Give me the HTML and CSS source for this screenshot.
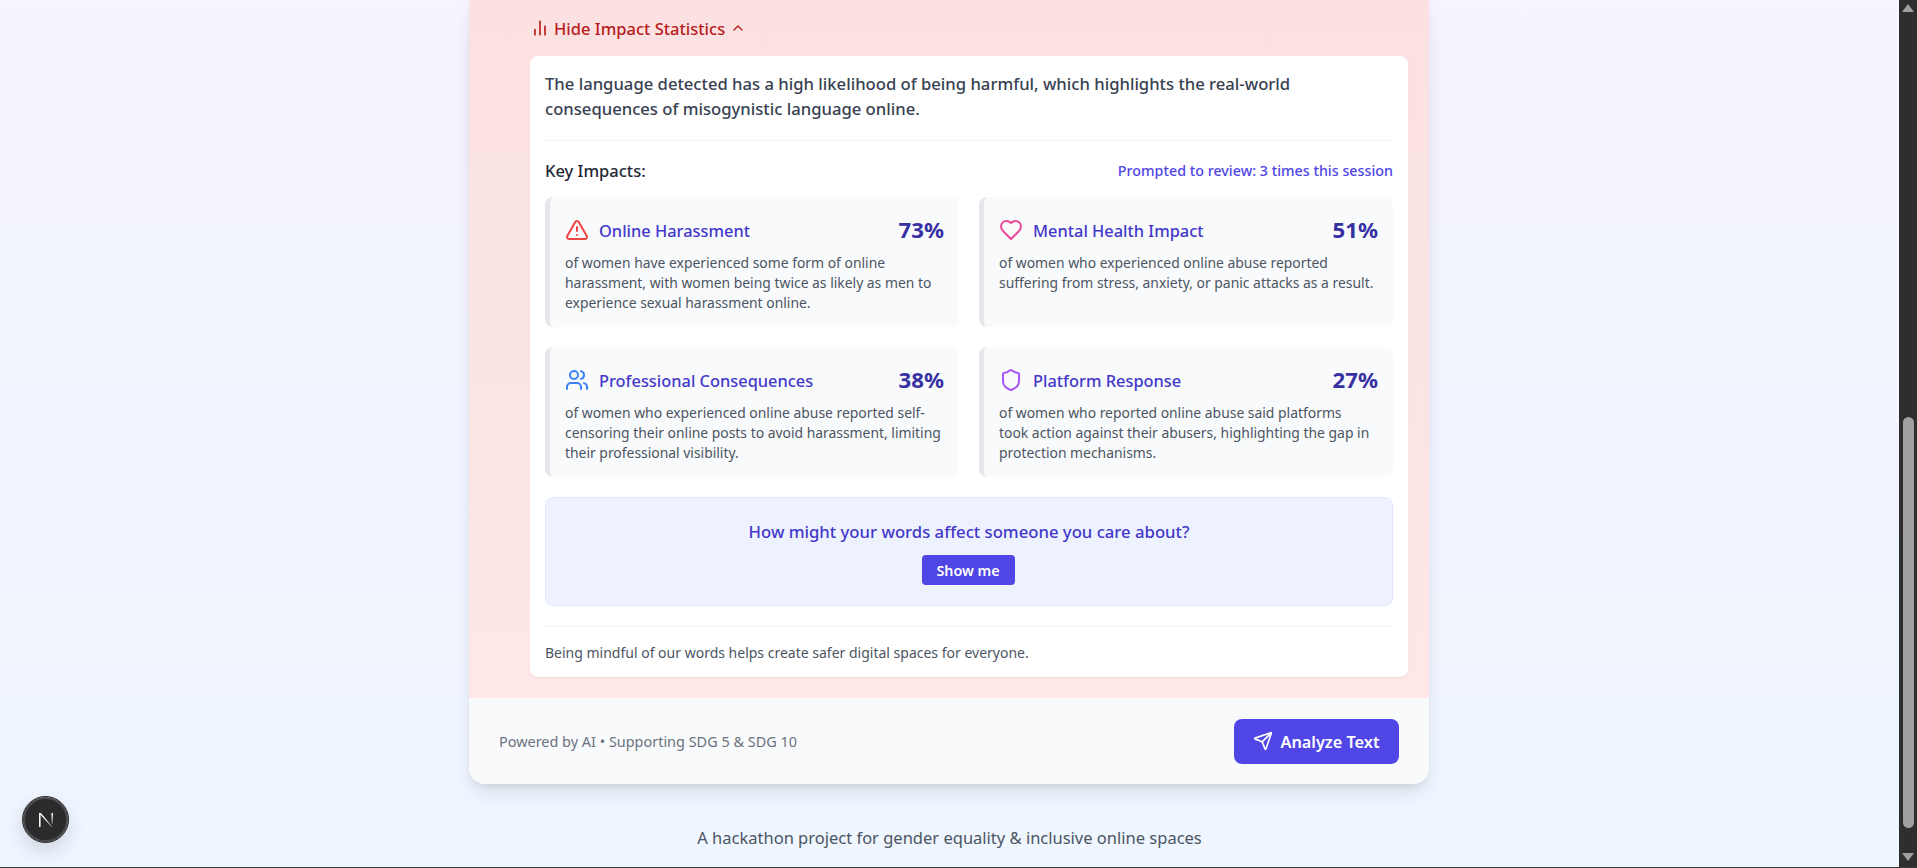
FILE: index.html
```html
<!DOCTYPE html>
<html lang="en">
<head>
    <meta charset="UTF-8">
    <meta name="viewport" content="width=device-width, initial-scale=1.0">
    <title>Impact Statistics</title>
    <link rel="stylesheet" href="styles.css">
</head>
<body>
    <div class="window">
        <div class="page">
            <div class="app-card">
                <section class="alert-panel">
                    <button class="toggle" type="button">
                        <svg class="icon toggle-chart" viewBox="0 0 24 24"><line x1="18" y1="20" x2="18" y2="10"/><line x1="12" y1="20" x2="12" y2="4"/><line x1="6" y1="20" x2="6" y2="14"/></svg>
                        <span>Hide Impact Statistics</span>
                        <svg class="icon toggle-chevron" viewBox="0 0 24 24"><path d="m18 15-6-6-6 6"/></svg>
                    </button>
                    <div class="stats-card">
                        <p class="lead">The language detected has a high likelihood of being harmful, which highlights the real-world consequences of misogynistic language online.</p>
                        <div class="stats-head">
                            <h3>Key Impacts:</h3>
                            <span class="prompted">Prompted to review: 3 times this session</span>
                        </div>
                        <div class="impact-grid">
                            <div class="impact">
                                <div class="impact-top">
                                    <svg class="icon impact-icon red" viewBox="0 0 24 24"><path d="m21.73 18-8-14a2 2 0 0 0-3.48 0l-8 14A2 2 0 0 0 4 21h16a2 2 0 0 0 1.73-3Z"/><path d="M12 9v4"/><path d="M12 17h.01"/></svg>
                                    <h4>Online Harassment</h4>
                                    <strong>73%</strong>
                                </div>
                                <p>of women have experienced some form of online harassment, with women being twice as likely as men to experience sexual harassment online.</p>
                            </div>
                            <div class="impact">
                                <div class="impact-top">
                                    <svg class="icon impact-icon pink" viewBox="0 0 24 24"><path d="M19 14c1.49-1.46 3-3.21 3-5.5A5.5 5.5 0 0 0 16.5 3c-1.76 0-3 .5-4.5 2-1.5-1.5-2.74-2-4.5-2A5.5 5.5 0 0 0 2 8.5c0 2.3 1.5 4.05 3 5.5l7 7Z"/></svg>
                                    <h4>Mental Health Impact</h4>
                                    <strong>51%</strong>
                                </div>
                                <p>of women who experienced online abuse reported suffering from stress, anxiety, or panic attacks as a result.</p>
                            </div>
                            <div class="impact">
                                <div class="impact-top">
                                    <svg class="icon impact-icon blue" viewBox="0 0 24 24"><path d="M16 21v-2a4 4 0 0 0-4-4H6a4 4 0 0 0-4 4v2"/><circle cx="9" cy="7" r="4"/><path d="M22 21v-2a4 4 0 0 0-3-3.87"/><path d="M16 3.13a4 4 0 0 1 0 7.75"/></svg>
                                    <h4>Professional Consequences</h4>
                                    <strong>38%</strong>
                                </div>
                                <p>of women who experienced online abuse reported self-censoring their online posts to avoid harassment, limiting their professional visibility.</p>
                            </div>
                            <div class="impact">
                                <div class="impact-top">
                                    <svg class="icon impact-icon purple" viewBox="0 0 24 24"><path d="M20 13c0 5-3.5 7.5-7.66 8.95a1 1 0 0 1-.67-.01C7.5 20.5 4 18 4 13V6a1 1 0 0 1 1-1c2 0 4.5-1.2 6.24-2.72a1.17 1.17 0 0 1 1.52 0C14.51 3.81 17 5 19 5a1 1 0 0 1 1 1z"/></svg>
                                    <h4>Platform Response</h4>
                                    <strong>27%</strong>
                                </div>
                                <p>of women who reported online abuse said platforms<br>took action against their abusers, highlighting the gap in protection mechanisms.</p>
                            </div>
                        </div>
                        <div class="reflect">
                            <p>How might your words affect someone you care about?</p>
                            <button type="button">Show me</button>
                        </div>
                        <p class="mindful">Being mindful of our words helps create safer digital spaces for everyone.</p>
                    </div>
                </section>
                <footer class="card-footer">
                    <span class="powered">Powered by AI • Supporting SDG 5 &amp; SDG 10</span>
                    <button class="analyze" type="button">
                        <svg class="icon" viewBox="0 0 24 24"><path d="M14.536 21.686a.5.5 0 0 0 .937-.024l6.5-19a.496.496 0 0 0-.635-.635l-19 6.5a.5.5 0 0 0-.024.937l7.93 3.18a2 2 0 0 1 1.112 1.11z"/><path d="m21.854 2.147-10.94 10.939"/></svg>
                        <span>Analyze Text</span>
                    </button>
                </footer>
            </div>
            <p class="tagline">A hackathon project for gender equality &amp; inclusive online spaces</p>
            <div class="next-badge">
                <svg viewBox="0 0 18 18" width="18" height="18">
                    <defs>
                        <linearGradient id="nextFade" x1="0" y1="0" x2="1" y2="1">
                            <stop offset="0.35" stop-color="#ffffff"/>
                            <stop offset="1" stop-color="#ffffff" stop-opacity="0.15"/>
                        </linearGradient>
                        <linearGradient id="nextStem" x1="0" y1="0" x2="0" y2="1">
                            <stop offset="0" stop-color="#ffffff"/>
                            <stop offset="1" stop-color="#ffffff" stop-opacity="0.2"/>
                        </linearGradient>
                    </defs>
                    <rect x="2" y="2" width="1.6" height="14" fill="#f2f2f2"/>
                    <polygon points="2,2 3.8,2 16,16 14.2,16" fill="url(#nextFade)"/>
                    <rect x="14.4" y="2" width="1.6" height="11" fill="url(#nextStem)"/>
                </svg>
            </div>
        </div>
        <div class="scrollbar">
            <span class="arrow-up"></span>
            <div class="scroll-track"><div class="scroll-thumb"></div></div>
            <span class="arrow-down"></span>
        </div>
    </div>
</body>
</html>
```

FILE: styles.css
```css
* {
    box-sizing: border-box;
}
body {
    margin: 0;
    font-family: "Noto Sans", "Open Sans", sans-serif;
    color: #1f2937;
    overflow: hidden;
}
h3, h4, p {
    margin: 0;
}
button {
    font-family: inherit;
    border: none;
    cursor: pointer;
}
.window {
    display: flex;
    height: 868px;
    border-bottom: 1px solid #3a3a3a;
}
.page {
    position: relative;
    flex: 1;
    display: flex;
    flex-direction: column;
    align-items: center;
    background: linear-gradient(to bottom, #f5f4ff, #eff6ff);
}
.icon {
    fill: none;
    stroke: currentColor;
    stroke-width: 2;
    stroke-linecap: round;
    stroke-linejoin: round;
    flex-shrink: 0;
}
.app-card {
    width: 960px;
    margin-right: 1px;
    border-radius: 0 0 16px 16px;
    box-shadow: 0 10px 20px -4px rgba(0,0,0,0.12), 0 4px 8px -4px rgba(0,0,0,0.1);
    overflow: hidden;
}
.alert-panel {
    height: 698px;
    padding: 18px 21px 0 61px;
    background: linear-gradient(to bottom, #fbe1e1, #fee7e7);
}
.toggle {
    display: flex;
    align-items: center;
    height: 20px;
    padding: 0;
    margin-bottom: 18px;
    background: none;
    color: #b91c1c;
    font-size: 16.5px;
    font-weight: 500;
}
.toggle-chart {
    width: 20px;
    height: 20px;
    margin-right: 4px;
}
.toggle-chevron {
    width: 16px;
    height: 16px;
    margin-left: 5px;
}
.stats-card {
    height: 621px;
    padding: 15px 15px 0;
    background: white;
    border-radius: 8px;
    box-shadow: 0 1px 2px rgba(0,0,0,0.06);
}
.lead {
    height: 70px;
    line-height: 25px;
    font-size: 16.65px;
    font-weight: 500;
    color: #374151;
    border-bottom: 1px solid #f3f4f6;
}
.stats-head {
    display: flex;
    justify-content: space-between;
    align-items: center;
    height: 56px;
    padding-top: 2px;
}
.stats-head h3 {
    font-size: 16.5px;
    font-weight: 500;
}
.prompted {
    font-size: 14.3px;
    font-weight: 500;
    color: #4f46e5;
}
.impact-grid {
    display: grid;
    grid-template-columns: 1fr 1fr;
    gap: 20px;
}
.impact {
    height: 130px;
    padding: 21px 15px 0 15px;
    background: #f9fafb;
    border-left: 5px solid #e5e7eb;
    border-radius: 8px;
}
.impact-top {
    display: flex;
    align-items: center;
    height: 24px;
    margin-bottom: 11px;
}
.impact-icon {
    width: 24px;
    height: 24px;
    margin-right: 10px;
}
.red { color: #ef4444; }
.pink { color: #ec4899; }
.blue { color: #3b82f6; }
.purple { color: #a855f7; }
.impact-top h4 {
    flex: 1;
    font-size: 16.4px;
    font-weight: 500;
    color: #4338ca;
}
.impact-top strong {
    margin-bottom: 2px;
    font-size: 22.2px;
    font-weight: 700;
    color: #3730a3;
}
.impact p {
    font-size: 13.9px;
    line-height: 20px;
    color: #4b5563;
}
.reflect {
    display: flex;
    flex-direction: column;
    align-items: center;
    height: 109px;
    margin-top: 20px;
    padding-top: 22px;
    background: #eef2ff;
    border: 1px solid #e0e7ff;
    border-radius: 8px;
}
.reflect p {
    height: 24px;
    line-height: 24px;
    font-size: 16.7px;
    font-weight: 500;
    color: #4338ca;
    margin-bottom: 11px;
}
.reflect button {
    width: 93px;
    height: 30px;
    margin-right: 2px;
    background: #4f46e5;
    color: white;
    font-size: 14.3px;
    font-weight: 600;
    border-radius: 4px;
}
.mindful {
    margin-top: 20px;
    padding-top: 16px;
    border-top: 1px solid #f3f4f6;
    font-size: 14px;
    line-height: 20px;
    color: #4b5563;
}
.card-footer {
    display: flex;
    justify-content: space-between;
    align-items: center;
    height: 86px;
    padding: 0 30px;
    background: #f9fafb;
    font-size: 14.45px;
    color: #6b7280;
}
.powered {
    padding-top: 1px;
}
.analyze {
    display: flex;
    align-items: center;
    gap: 7px;
    width: 165px;
    height: 45px;
    justify-content: center;
    background: #4f46e5;
    color: white;
    font-size: 16.3px;
    font-weight: 600;
    border-radius: 8px;
}
.analyze span {
    padding-top: 1px;
}
.analyze .icon {
    width: 20px;
    height: 20px;
}
.tagline {
    margin-top: 43px;
    font-size: 16.5px;
    line-height: 22px;
    color: #4b5563;
}
.next-badge {
    position: absolute;
    left: 23px;
    top: 797px;
    width: 45px;
    height: 45px;
    display: flex;
    align-items: center;
    justify-content: center;
    border-radius: 50%;
    background: #2b2b2d;
    border: 2px solid #4a4a4c;
    outline: 1px solid #1c1c1e;
    box-shadow: 0 8px 20px rgba(0,0,0,0.15);
}
.scrollbar {
    width: 18px;
    display: flex;
    flex-direction: column;
    align-items: center;
    background: #2e2e2e;
}
.arrow-up, .arrow-down {
    width: 0;
    height: 0;
    border-left: 6px solid transparent;
    border-right: 6px solid transparent;
}
.arrow-up {
    margin-top: 4px;
    border-bottom: 8px solid #a0a0a0;
}
.arrow-down {
    margin-bottom: 6px;
    border-top: 8px solid #a0a0a0;
}
.scroll-track {
    flex: 1;
    width: 100%;
    padding: 405px 3px 0 4px;
}
.scroll-thumb {
    height: 411px;
    background: #a0a0a0;
    border-radius: 6px;
}
```
